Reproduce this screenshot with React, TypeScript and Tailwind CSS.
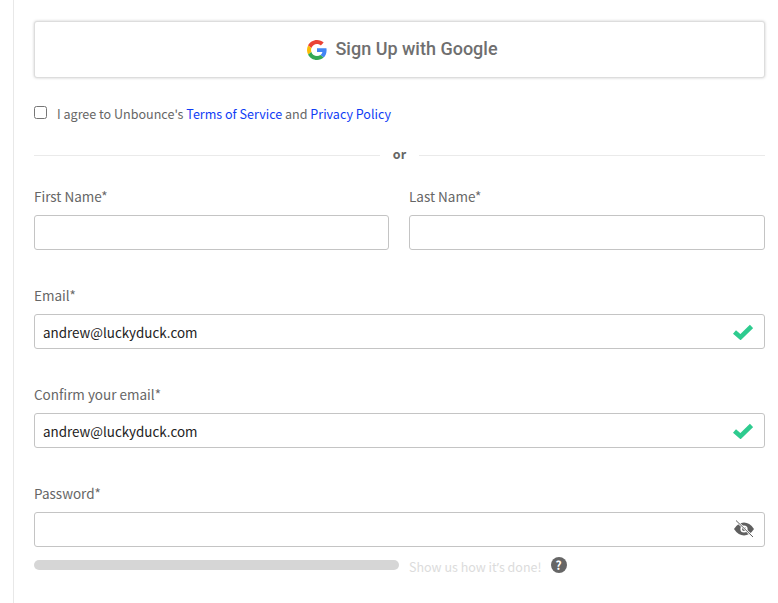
const textFont = "font-['Noto_Sans_CJK_SC','Noto_Sans',sans-serif]";

function GoogleIcon() {
  return (
    <svg width="20" height="20" viewBox="0 0 48 48">
      <path fill="#EA4335" d="M24 9.5c3.54 0 6.71 1.22 9.21 3.6l6.85-6.85C35.9 2.38 30.47 0 24 0 14.62 0 6.51 5.38 2.56 13.22l7.98 6.19C12.43 13.72 17.74 9.5 24 9.5z" />
      <path fill="#4285F4" d="M46.98 24.55c0-1.57-.15-3.09-.38-4.55H24v9.02h12.94c-.58 2.96-2.26 5.48-4.78 7.18l7.73 6c4.51-4.18 7.09-10.36 7.09-17.65z" />
      <path fill="#FBBC05" d="M10.53 28.59c-.48-1.45-.76-2.99-.76-4.59s.27-3.14.76-4.59l-7.98-6.19C.92 16.46 0 20.12 0 24c0 3.88.92 7.54 2.56 10.78l7.97-6.19z" />
      <path fill="#34A853" d="M24 48c6.48 0 11.93-2.13 15.89-5.81l-7.73-6c-2.15 1.45-4.92 2.3-8.16 2.3-6.26 0-11.57-4.22-13.47-9.91l-7.98 6.19C6.51 42.62 14.62 48 24 48z" />
    </svg>
  );
}

function CheckIcon() {
  return (
    <svg width="20" height="16" viewBox="0 0 20 16" className="text-[#2ecb8f]">
      <path d="M1.5 8 L7.5 13.2 L18.5 2.5" fill="none" stroke="currentColor" strokeWidth="4.6" />
    </svg>
  );
}

function EyeOffIcon() {
  return (
    <svg width="22" height="18" viewBox="0 0 22 18" className="-mr-[2px] mb-[1px]">
      <path fill="#5f5f5f" d="M1 9 C4 4.5 7.5 2.5 11 2.5 S18 4.5 21 9 C18 13.5 14.5 15.5 11 15.5 S4 13.5 1 9 Z" />
      <circle cx="11" cy="9" r="3.6" fill="#ffffff" />
      <circle cx="11" cy="9" r="2" fill="#5f5f5f" />
      <path d="M3 0.5 L20 17" stroke="#ffffff" strokeWidth="2.4" />
      <path d="M3 0.5 L20 17" stroke="#5f5f5f" strokeWidth="1" />
    </svg>
  );
}

function Field({
  label,
  value,
  icon,
  className,
}: {
  label: string;
  value?: string;
  icon?: React.ReactNode;
  className?: string;
}) {
  return (
    <div className={className}>
      <div className="text-[13.5px] leading-[20px] text-[#666666] mb-[9px]">{label}</div>
      <div className="h-[35px] border border-[#c4c4c4] rounded-[3px] bg-white flex items-center justify-between pl-[8px] pr-[11px]">
        <span className="text-[13.4px] text-[#222222] pt-[1px]">{value}</span>
        {icon}
      </div>
    </div>
  );
}

export default function App() {
  return (
    <div className="w-[778px] h-[603px] overflow-hidden bg-white pl-[13px]">
      <div className={`h-[603px] border-l border-[#e8e8e8] pl-[20px] pr-[13px] pt-[21px] ${textFont}`}>
        {/* google */}
        <button className="w-full h-[57px] border border-[#dddddd] rounded-[3px] shadow-[0_0_3px_rgba(0,0,0,0.2)] bg-white flex items-center justify-center gap-[8px] pl-[6px]">
          <GoogleIcon />
          <span className="font-['Roboto',sans-serif] font-medium text-[18px] text-[#6f6f6f] mb-[2px]">Sign Up with Google</span>
        </button>

        {/* terms */}
        <div className="flex items-center mt-[27px] h-[18px]">
          <input type="checkbox" className="w-[13px] h-[13px] mb-[3px]" />
          <span className="ml-[10px] text-[12.55px] text-[#666666]">
            I agree to Unbounce's <a className="text-[#0f3df5]">Terms of Service</a> and{" "}
            <a className="text-[#0f3df5]">Privacy Policy</a>
          </span>
        </div>

        {/* or */}
        <div className="flex items-center mt-[23px] h-[18px]">
          <div className="flex-1 h-px bg-[#eaeaea]" />
          <span className="w-[39px] text-center text-[12.5px] font-bold text-[#666666] mb-[2px]">or</span>
          <div className="flex-1 h-px bg-[#eaeaea]" />
        </div>

        <div className="flex gap-[20px] mt-[22px]">
          <Field label="First Name*" className="w-[355px]" />
          <Field label="Last Name*" className="flex-1" />
        </div>

        <Field label="Email*" value="andrew@luckyduck.com" icon={<CheckIcon />} className="mt-[35px]" />
        <Field label="Confirm your email*" value="andrew@luckyduck.com" icon={<CheckIcon />} className="mt-[35px]" />
        <Field label="Password*" icon={<EyeOffIcon />} className="mt-[35px]" />

        {/* strength */}
        <div className="flex items-center mt-[9px] h-[18px]">
          <div className="w-[365px] h-[10px] rounded-full bg-[#d6d6d6]" />
          <span className="ml-[10px] text-[12.5px] text-[#dcdcdc] pt-[5px]">
            Show us how it<span className="font-['Noto_Sans',sans-serif]">’</span>s done!
          </span>
          <span className="ml-[9px] w-[16px] h-[16px] rounded-full bg-[#666666] text-white text-[12px] font-bold flex items-center justify-center">?</span>
        </div>
      </div>
    </div>
  );
}
